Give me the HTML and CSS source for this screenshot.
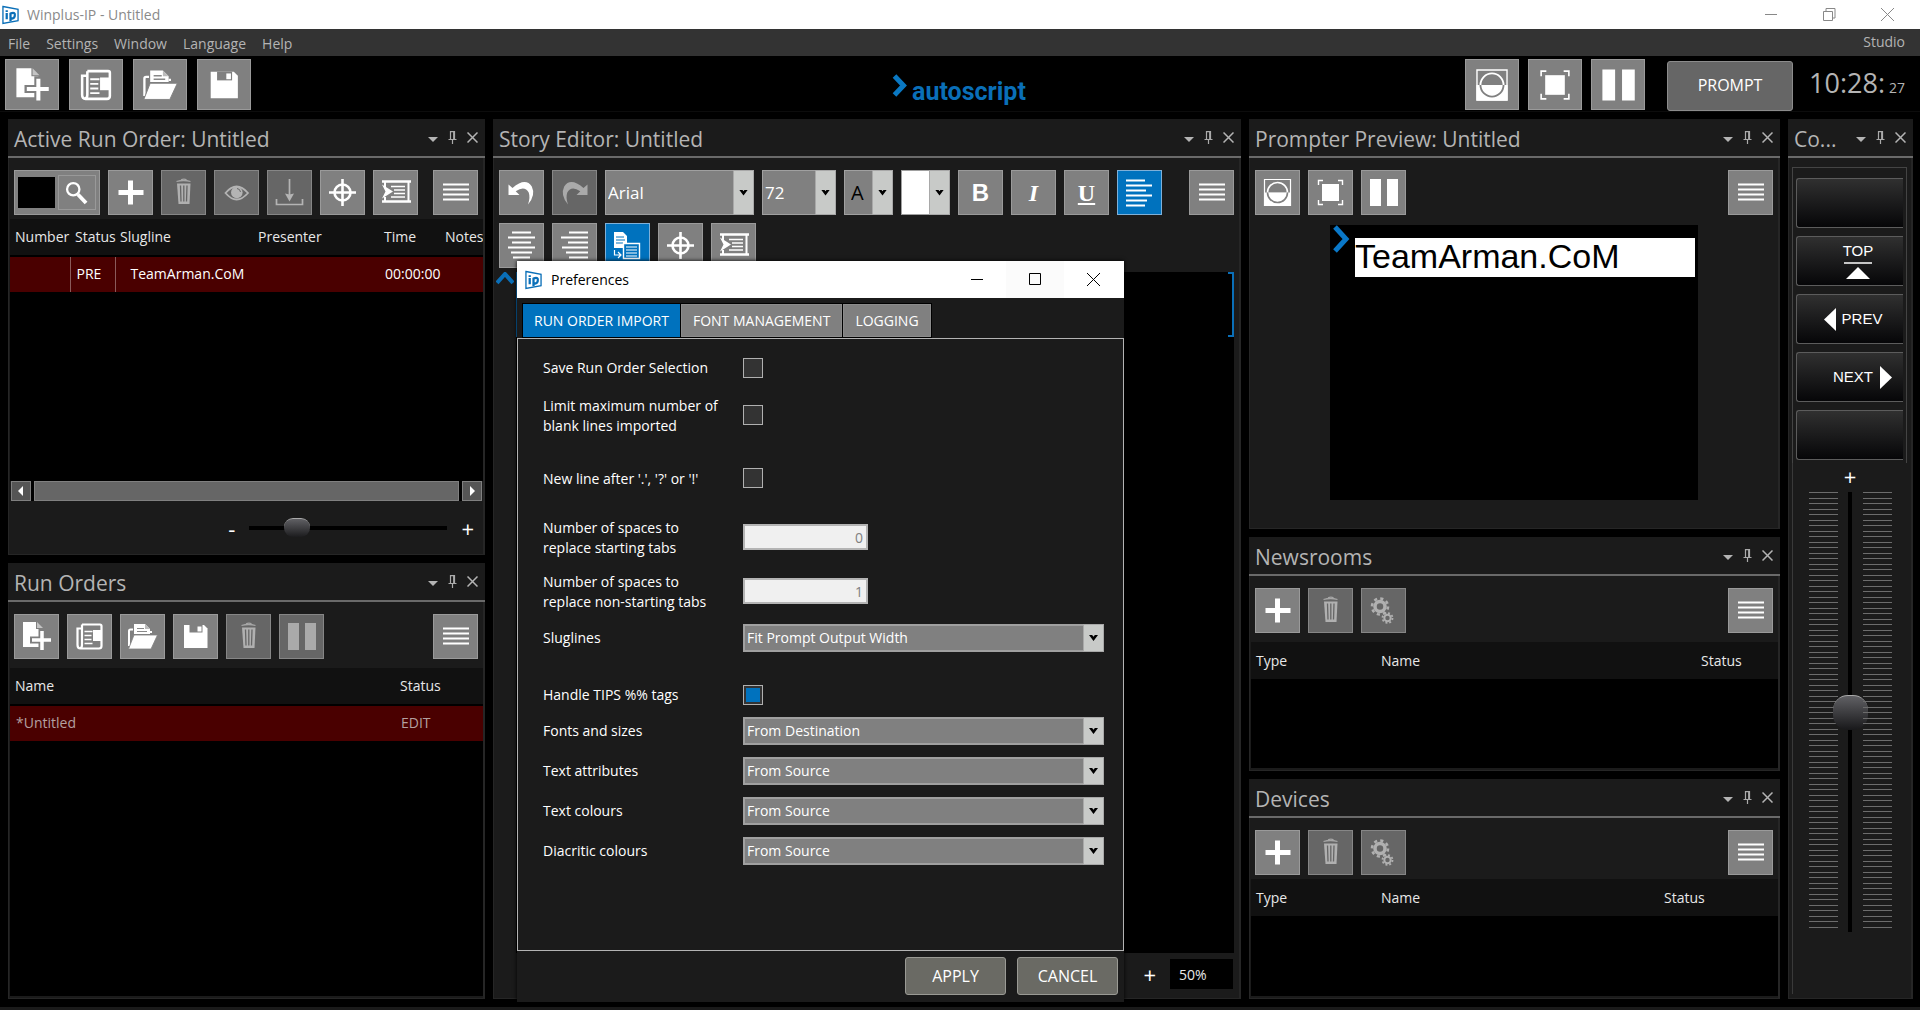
FILE: index.html
```html
<!DOCTYPE html>
<html lang="en">
<head>
<meta charset="utf-8">
<title>Winplus-IP - Untitled</title>
<link rel="stylesheet" href="styles.css">
</head>
<body>
<svg class="sprite" aria-hidden="true">
  <symbol id="i-logo" viewBox="0 0 18 20"><path d="M1 1l16 3v12L1 19z" fill="#fff" stroke="#0a6fb8" stroke-width="1.400"/><path d="M5 8v6.500M5 5v1.800M9 7.500v9M9 8.500c4-2 5 0 4.500 2.500S11 14.500 9 13" fill="none" stroke="#0a6fb8" stroke-width="2.400"/></symbol>
  <symbol id="i-new" viewBox="0 0 45 45"><path d="M9 8h13v7h6v18H9z" fill="#fff"/><path d="M23 8l6 6h-6z" fill="#c4c4c4"/><path d="M28 15v22M16 26h22" stroke="#808080" stroke-width="7"/><path d="M28 17v19M18 26h19" stroke="#fff" stroke-width="3.500"/></symbol>
  <symbol id="i-news" viewBox="0 0 45 45"><path d="M15 10.500h18q1.500 0 1.500 1.500v20q0 2.500-2.500 2.500H13.500Q10.500 34.500 10.500 31V14.500H14M15 10.500V31q0 3-2 3" fill="none" stroke="#fff" stroke-width="2.200"/><path d="M17.500 17.500h8M17.500 21.500h7M17.500 25.500h7M17.500 29.500h8" stroke="#fff" stroke-width="1.600"/><path d="M26 16h8v11h-8z" fill="#fff"/></symbol>
  <symbol id="i-open" viewBox="0 0 45 45"><path d="M9 32V17q0-1.500 1.500-1.500H13M31 19v-2" fill="none" stroke="#fff" stroke-width="2"/><path d="M14 10h11l5 5v5H14z" fill="#fff"/><path d="M25 10l5 5h-5z" fill="#bbb"/><path d="M17 14.500h7M17 17.500h10" stroke="#888" stroke-width="1.200"/><path d="M14 21h23.500L31 35H8.500z" fill="#fff" stroke="#808080" stroke-width=".8"/></symbol>
  <symbol id="i-save" viewBox="0 0 45 45"><path d="M11 11h20l3.500 3.500V34H11z" fill="#fff"/><path d="M16.500 11h13v7.500h-13z" fill="#808080"/><path d="M24.500 12.500h4v5h-4z" fill="#fff"/></symbol>
  <symbol id="i-trash" viewBox="0 0 45 45"><path d="M15.500 11.500q7-2 14 0M20 9.800q3-1.200 5.500 0" fill="none" stroke="#a6a6a6" stroke-width="1.300"/><path d="M16 13.500h13.500L28.500 34h-11z" fill="#b0b0b0"/><path d="M19.500 15.500l.5 16M22.800 15.500v16M26 15.500l-.5 16" stroke="#666" stroke-width="1.300"/></symbol>
  <symbol id="i-pause" viewBox="0 0 45 45"><path d="M9 9h11v27H9zM26 9h11v27H26z" fill="currentColor"/></symbol>
  <symbol id="i-menu" viewBox="0 0 45 45"><path d="M10 14.500h26M10 19.500h26M10 24.500h26M10 29.500h26" stroke="#fff" stroke-width="2"/></symbol>
  <symbol id="i-plus" viewBox="0 0 45 45"><path d="M22.500 10.500v24M10.500 22.500h25" stroke="#fff" stroke-width="5"/></symbol>
  <symbol id="i-eye" viewBox="0 0 45 45"><path d="M11.500 23q11-13 22.500 0-11.500 13-22.500 0z" fill="none" stroke="#b4b4b4" stroke-width="1.800"/><circle cx="22.800" cy="22.500" r="5.800" fill="#b4b4b4"/><path d="M23 18.500a4 4 0 0 1 3.500 3.500" fill="none" stroke="#666" stroke-width="1"/></symbol>
  <symbol id="i-down" viewBox="0 0 45 45"><path d="M22.500 9v17M9.500 29v5.500h26V29" fill="none" stroke="#b4b4b4" stroke-width="1.700"/><path d="M18 23.500l4.500 1 4.500-1-4.500 8z" fill="#b4b4b4"/></symbol>
  <symbol id="i-target" viewBox="0 0 45 45"><circle cx="22.500" cy="22.500" r="8" fill="none" stroke="#fff" stroke-width="2.600"/><path d="M22.500 9v27M9 22.500h27" stroke="#fff" stroke-width="2.600"/></symbol>
  <symbol id="i-scroll" viewBox="0 0 45 45"><path d="M9 11.500h29M9 31.500h29" stroke="#fff" stroke-width="2.600"/><path d="M12 12v5M12 27v4M35.500 12v19" stroke="#fff" stroke-width="2"/><path d="M9 14.500l11 7-11 7 3.500-7z" fill="#fff"/><path d="M18 16.500h14M21 20h11M21 23.500h11M18 27h14" stroke="#fff" stroke-width="1.500"/></symbol>
  <symbol id="i-undo" viewBox="0 0 45 45"><path d="M9.500 14.500v10.500h11l-3.800-3.800q9-6 13 1.300 1.800 5-.7 12 8-9.500 3.800-18Q26.500 7 13.500 18z" fill="currentColor"/></symbol>
  <symbol id="i-left" viewBox="0 0 45 45"><path d="M9 10.500h19M9 15.500h26M9 20.500h20M9 25.500h26M9 30.500h21M9 35.500h19" stroke="#fff" stroke-width="1.800"/></symbol>
  <symbol id="i-center" viewBox="0 0 45 45"><path d="M13 9.500h19M9 14.500h27M13 19.500h19M9 24.500h27M12 29.500h21M14 34.500h17" stroke="#fff" stroke-width="1.800"/></symbol>
  <symbol id="i-right" viewBox="0 0 45 45"><path d="M17 9.500h19M9 14.500h27M16 19.500h20M10 24.500h26M14 29.500h22M17 34.500h19" stroke="#fff" stroke-width="1.800"/></symbol>
  <symbol id="i-paste" viewBox="0 0 45 45"><path d="M9 9h9l4 4v12H9z" fill="#fff"/><path d="M11 14h8M11 17h9M11 20h7" stroke="#0072be" stroke-width="1"/><path d="M9.500 27v5h6M13 29l3 3-3 3" fill="none" stroke="#fff" stroke-width="1.200"/><path d="M18.500 20.500h16v15h-16z" fill="#0072be" stroke="#fff" stroke-width="1.400"/><path d="M21 24h11M21 27h11M21 30h11M21 33h11" stroke="#fff" stroke-width="1.200"/></symbol>
  <symbol id="i-blank" viewBox="0 0 45 45"><path d="M9.500 9.500h26v26h-26z" fill="#808080" stroke="#fff" stroke-width="1.200"/><path d="M9 22.500h27V36H9z" fill="#fff"/><path d="M12.500 22.500a10 10 0 0 1 20 0" fill="#808080" stroke="#fff" stroke-width="1.600"/><path d="M12.500 22.500a10 10 0 0 0 20 0" fill="#fff" stroke="#808080" stroke-width="1.600"/></symbol>
  <symbol id="i-frame" viewBox="0 0 45 45"><path d="M14 14h17v17H14z" fill="#fff"/><path d="M10.500 15v-4.500H15M30 10.500h4.500V15M34.500 30v4.500H30M15 34.500h-4.500V30" fill="none" stroke="#fff" stroke-width="1.400"/></symbol>
  <symbol id="i-gears" viewBox="0 0 45 45"><g fill="none" stroke="#b0b0b0"><circle cx="19" cy="18.500" r="5" stroke-width="3.500"/><circle cx="19" cy="18.500" r="8" stroke-width="2.600" stroke-dasharray="3.140 3.140"/><circle cx="26.500" cy="30" r="3.200" stroke-width="2"/><circle cx="26.500" cy="30" r="5" stroke-width="1.800" stroke-dasharray="1.960 1.960"/></g></symbol>
  <symbol id="i-search" viewBox="0 0 40 36"><circle cx="15" cy="13" r="6.500" fill="none" stroke="#fff" stroke-width="2.400"/><path d="M20 18.500l8.500 9" stroke="#fff" stroke-width="4"/></symbol>
  <symbol id="i-caret" viewBox="0 0 10 5"><path d="M0 0h10L5 5z" fill="#b4b4b4"/></symbol>
  <symbol id="i-pin" viewBox="0 0 9 13"><path d="M2.500 8V.7h4V8M.5 8.500h8M4.500 8.500V13M5.700 1v7" fill="none" stroke="#aaa" stroke-width="1.200"/></symbol>
  <symbol id="i-x" viewBox="0 0 11 11"><path d="M.5.5l10 10M10.500.5l-10 10" fill="none" stroke="currentColor" stroke-width="1.500"/></symbol>
</svg>

<div class="app">
  <header class="titlebar">
    <svg class="logo-icon"><use href="#i-logo"/></svg>
    <h1 class="titlebar-text">Winplus-IP - Untitled</h1>
    <div class="winbtns">
      <button class="winbtn" aria-label="Minimize"><svg width="13" height="13"><path d="M0 6.500h12" stroke="#888"/></svg></button>
      <button class="winbtn" aria-label="Restore"><svg width="13" height="13"><path d="M.5 3.500h9v9h-9zM3 3V.5h9V10h-2" fill="none" stroke="#888"/></svg></button>
      <button class="winbtn" aria-label="Close"><svg width="13" height="13"><path d="M0 0l13 13M13 0L0 13" stroke="#888"/></svg></button>
    </div>
  </header>
  <nav class="menubar">
    <button class="menu-item">File</button><button class="menu-item">Settings</button><button class="menu-item">Window</button><button class="menu-item">Language</button><button class="menu-item">Help</button>
    <span class="studio">Studio</span>
  </nav>
  <div class="mainbar">
    <div class="bar-group">
      <button class="tool big" aria-label="New"><svg><use href="#i-new"/></svg></button>
      <button class="tool big" aria-label="New from template"><svg><use href="#i-news"/></svg></button>
      <button class="tool big" aria-label="Open"><svg><use href="#i-open"/></svg></button>
      <button class="tool big" aria-label="Save"><svg><use href="#i-save"/></svg></button>
    </div>
    <div class="brand"><svg class="brand-mark" viewBox="0 0 15 23"><path d="M2 2l9 9.500L2 21" fill="none" stroke="#0a78c2" stroke-width="5"/></svg><span>autoscript</span></div>
    <div class="bar-group bar-right">
      <button class="tool big" aria-label="Blank"><svg><use href="#i-blank"/></svg></button>
      <button class="tool big" aria-label="Frame"><svg><use href="#i-frame"/></svg></button>
      <button class="tool big" aria-label="Pause"><svg><use href="#i-pause"/></svg></button>
      <button class="prompt-btn">PROMPT</button>
      <div class="clock">10:28:<span class="clock-sec">27</span></div>
    </div>
  </div>

  <main class="workspace">
    <div class="col col-left">
      <section class="pane">
        <header class="pane-head"><h2>Active Run Order: Untitled</h2><div class="pane-btns"><button aria-label="Menu"><svg width="10" height="5"><use href="#i-caret"/></svg></button><button aria-label="Pin"><svg width="9" height="13"><use href="#i-pin"/></svg></button><button aria-label="Close"><svg width="11" height="11"><use href="#i-x"/></svg></button></div></header>
        <div class="pane-body">
          <div class="toolbar">
            <div class="search"><input class="search-input" aria-label="Search"><button class="search-btn" aria-label="Search"><svg width="38" height="36"><use href="#i-search"/></svg></button></div>
            <button class="tool" aria-label="Add"><svg><use href="#i-plus"/></svg></button>
            <button class="tool off" aria-label="Delete"><svg><use href="#i-trash"/></svg></button>
            <button class="tool off" aria-label="Show"><svg><use href="#i-eye"/></svg></button>
            <button class="tool off" aria-label="Import"><svg><use href="#i-down"/></svg></button>
            <button class="tool" aria-label="Target"><svg><use href="#i-target"/></svg></button>
            <button class="tool" aria-label="Cue"><svg><use href="#i-scroll"/></svg></button>
            <button class="tool push" aria-label="More"><svg><use href="#i-menu"/></svg></button>
          </div>
          <div class="list">
            <table class="grid runorder">
              <colgroup><col class="w-num"><col class="w-stat"><col><col class="w-pres"><col class="w-time"><col class="w-notes"></colgroup>
              <thead><tr><th>Number</th><th>Status</th><th>Slugline</th><th>Presenter</th><th>Time</th><th>Notes</th></tr></thead>
              <tbody><tr class="sel"><td></td><td class="div-l">PRE</td><td class="div-l slug">TeamArman.CoM</td><td></td><td class="time">00:00:00</td><td></td></tr></tbody>
            </table>
          </div>
          <div class="hscroll"><button aria-label="Scroll left"><svg width="6" height="10"><path d="M5 0v10L0 5z" fill="#fff"/></svg></button><div class="hscroll-thumb"></div><button aria-label="Scroll right"><svg width="6" height="10"><path d="M1 0v10l5-5z" fill="#fff"/></svg></button></div>
          <div class="zoombar"><span class="sign">-</span><input class="hslider" type="range" min="0" max="100" value="20" aria-label="Zoom"><span class="sign">+</span></div>
        </div>
      </section>
      <section class="pane">
        <header class="pane-head"><h2>Run Orders</h2><div class="pane-btns"><button aria-label="Menu"><svg width="10" height="5"><use href="#i-caret"/></svg></button><button aria-label="Pin"><svg width="9" height="13"><use href="#i-pin"/></svg></button><button aria-label="Close"><svg width="11" height="11"><use href="#i-x"/></svg></button></div></header>
        <div class="pane-body pad-end">
          <div class="toolbar roomy">
            <button class="tool" aria-label="New"><svg><use href="#i-new"/></svg></button>
            <button class="tool" aria-label="New from template"><svg><use href="#i-news"/></svg></button>
            <button class="tool" aria-label="Open"><svg><use href="#i-open"/></svg></button>
            <button class="tool" aria-label="Save"><svg><use href="#i-save"/></svg></button>
            <button class="tool off" aria-label="Delete"><svg><use href="#i-trash"/></svg></button>
            <button class="tool off" aria-label="Pause"><svg><use href="#i-pause"/></svg></button>
            <button class="tool push" aria-label="More"><svg><use href="#i-menu"/></svg></button>
          </div>
          <div class="list">
            <table class="grid">
              <colgroup><col><col class="w-edit"></colgroup>
              <thead><tr><th>Name</th><th>Status</th></tr></thead>
              <tbody><tr class="sel dim"><td>*Untitled</td><td>EDIT</td></tr></tbody>
            </table>
          </div>
        </div>
      </section>
    </div>

    <section class="pane">
      <header class="pane-head"><h2>Story Editor: Untitled</h2><div class="pane-btns"><button aria-label="Menu"><svg width="10" height="5"><use href="#i-caret"/></svg></button><button aria-label="Pin"><svg width="9" height="13"><use href="#i-pin"/></svg></button><button aria-label="Close"><svg width="11" height="11"><use href="#i-x"/></svg></button></div></header>
      <div class="pane-body">
        <div class="toolbar editor-tools">
          <button class="tool" aria-label="Undo"><svg><use href="#i-undo"/></svg></button>
          <button class="tool off" aria-label="Redo"><svg class="flip"><use href="#i-undo"/></svg></button>
          <span class="combo font-name"><select aria-label="Font"><option>Arial</option></select></span>
          <span class="combo font-size"><select aria-label="Size"><option>72</option></select></span>
          <span class="combo swatch text-col"><select aria-label="Text colour"><option>A</option></select></span>
          <span class="combo swatch back-col"><select aria-label="Background colour"><option></option></select></span>
          <button class="tool bold">B</button>
          <button class="tool italic">I</button>
          <button class="tool under">U</button>
          <button class="tool on" aria-label="Align left"><svg><use href="#i-left"/></svg></button>
          <button class="tool push" aria-label="More"><svg><use href="#i-menu"/></svg></button>
        </div>
        <div class="toolbar second">
          <button class="tool" aria-label="Centre"><svg><use href="#i-center"/></svg></button>
          <button class="tool" aria-label="Align right"><svg><use href="#i-right"/></svg></button>
          <button class="tool on" aria-label="Paste"><svg><use href="#i-paste"/></svg></button>
          <button class="tool" aria-label="Target"><svg><use href="#i-target"/></svg></button>
          <button class="tool" aria-label="Cue"><svg><use href="#i-scroll"/></svg></button>
        </div>
        <div class="editor">
          <svg class="up-mark" width="18" height="13"><path d="M1 11l8-9 8 9" fill="none" stroke="#0a6fb8" stroke-width="4"/></svg>
          <div class="editor-page"><div class="bracket left"></div><div class="bracket right"></div></div>
        </div>
        <div class="editor-foot"><span class="sign">+</span><input class="zoom-val" value="50%" aria-label="Zoom level"></div>
      </div>
    </section>

    <div class="col col-right">
      <section class="pane">
        <header class="pane-head"><h2>Prompter Preview: Untitled</h2><div class="pane-btns"><button aria-label="Menu"><svg width="10" height="5"><use href="#i-caret"/></svg></button><button aria-label="Pin"><svg width="9" height="13"><use href="#i-pin"/></svg></button><button aria-label="Close"><svg width="11" height="11"><use href="#i-x"/></svg></button></div></header>
        <div class="pane-body">
          <div class="toolbar">
            <button class="tool" aria-label="Blank"><svg><use href="#i-blank"/></svg></button>
            <button class="tool" aria-label="Frame"><svg><use href="#i-frame"/></svg></button>
            <button class="tool" aria-label="Pause"><svg><use href="#i-pause"/></svg></button>
            <button class="tool push" aria-label="More"><svg><use href="#i-menu"/></svg></button>
          </div>
          <div class="preview">
            <svg class="cue" width="20" height="28" viewBox="0 0 20 28"><path d="M4 2l11 12L4 26" fill="none" stroke="#0a78c8" stroke-width="5"/></svg>
            <div class="preview-line">TeamArman.CoM</div>
          </div>
        </div>
      </section>
      <section class="pane">
        <header class="pane-head"><h2>Newsrooms</h2><div class="pane-btns"><button aria-label="Menu"><svg width="10" height="5"><use href="#i-caret"/></svg></button><button aria-label="Pin"><svg width="9" height="13"><use href="#i-pin"/></svg></button><button aria-label="Close"><svg width="11" height="11"><use href="#i-x"/></svg></button></div></header>
        <div class="pane-body pad-end">
          <div class="toolbar roomy">
            <button class="tool" aria-label="Add"><svg><use href="#i-plus"/></svg></button>
            <button class="tool off" aria-label="Delete"><svg><use href="#i-trash"/></svg></button>
            <button class="tool off" aria-label="Settings"><svg><use href="#i-gears"/></svg></button>
            <button class="tool push" aria-label="More"><svg><use href="#i-menu"/></svg></button>
          </div>
          <div class="list"><table class="grid"><colgroup><col class="w-type"><col><col class="w-news"></colgroup><thead><tr><th>Type</th><th>Name</th><th>Status</th></tr></thead></table></div>
        </div>
      </section>
      <section class="pane">
        <header class="pane-head"><h2>Devices</h2><div class="pane-btns"><button aria-label="Menu"><svg width="10" height="5"><use href="#i-caret"/></svg></button><button aria-label="Pin"><svg width="9" height="13"><use href="#i-pin"/></svg></button><button aria-label="Close"><svg width="11" height="11"><use href="#i-x"/></svg></button></div></header>
        <div class="pane-body pad-end">
          <div class="toolbar">
            <button class="tool" aria-label="Add"><svg><use href="#i-plus"/></svg></button>
            <button class="tool off" aria-label="Delete"><svg><use href="#i-trash"/></svg></button>
            <button class="tool off" aria-label="Settings"><svg><use href="#i-gears"/></svg></button>
            <button class="tool push" aria-label="More"><svg><use href="#i-menu"/></svg></button>
          </div>
          <div class="list"><table class="grid"><colgroup><col class="w-type"><col><col class="w-dev"></colgroup><thead><tr><th>Type</th><th>Name</th><th>Status</th></tr></thead></table></div>
        </div>
      </section>
    </div>

    <section class="pane">
      <header class="pane-head"><h2>Co...</h2><div class="pane-btns"><button aria-label="Menu"><svg width="10" height="5"><use href="#i-caret"/></svg></button><button aria-label="Pin"><svg width="9" height="13"><use href="#i-pin"/></svg></button><button aria-label="Close"><svg width="11" height="11"><use href="#i-x"/></svg></button></div></header>
      <div class="pane-body control">
        <div class="keys">
          <button class="key" aria-label="Unassigned"></button>
          <button class="key key-top"><span>TOP</span><svg width="28" height="18"><path d="M0 1h28" stroke="#fff" stroke-width="1.500"/><path d="M14 5l12 12H2z" fill="#fff"/></svg></button>
          <button class="key key-prev"><svg width="12" height="23"><path d="M12 0v23L0 11.500z" fill="#fff"/></svg><span>PREV</span></button>
          <button class="key key-next"><span>NEXT</span><svg width="12" height="23"><path d="M0 0v23l12-11.500z" fill="#fff"/></svg></button>
          <button class="key" aria-label="Unassigned"></button>
        </div>
        <div class="speed">
          <span class="sign">+</span>
          <div class="fader"><div class="ticks"></div><input class="vslider" type="range" min="0" max="100" value="50" aria-label="Speed"><div class="ticks"></div></div>
        </div>
      </div>
    </section>
  </main>
  <footer class="statusbar"></footer>
</div>

<div class="dialog" role="dialog" aria-labelledby="dlg-title">
  <header class="dlg-head">
    <svg class="logo-icon"><use href="#i-logo"/></svg>
    <h2 id="dlg-title">Preferences</h2>
    <div class="winbtns">
      <button class="winbtn" aria-label="Minimize"><svg width="13" height="13"><path d="M0 6.500h12" stroke="#000"/></svg></button>
      <button class="winbtn hover" aria-label="Maximize"><svg width="13" height="13"><path d="M.5.500h11v11H.5z" fill="none" stroke="#000"/></svg></button>
      <button class="winbtn" aria-label="Close"><svg width="13" height="13"><path d="M0 0l13 13M13 0L0 13" stroke="#000"/></svg></button>
    </div>
  </header>
  <div class="tabs" role="tablist">
    <button class="tab active" role="tab" aria-selected="true">RUN ORDER IMPORT</button><button class="tab" role="tab">FONT MANAGEMENT</button><button class="tab" role="tab">LOGGING</button>
  </div>
  <form class="form">
    <div class="row"><label for="f1">Save Run Order Selection</label><input id="f1" type="checkbox"></div>
    <div class="row two"><label for="f2">Limit maximum number of<br>blank lines imported</label><input id="f2" type="checkbox"></div>
    <div class="row apart"><label for="f3">New line after '.', '?' or '!'</label><input id="f3" type="checkbox"></div>
    <div class="row two apart-s"><label for="f4">Number of spaces to<br>replace starting tabs</label><input id="f4" type="text" value="0"></div>
    <div class="row two"><label for="f5">Number of spaces to<br>replace non-starting tabs</label><input id="f5" type="text" value="1"></div>
    <div class="row"><label for="f6">Sluglines</label><span class="combo"><select id="f6"><option>Fit Prompt Output Width</option></select></span></div>
    <div class="row check"><label for="f7">Handle TIPS %% tags</label><input id="f7" type="checkbox" checked></div>
    <div class="row"><label for="f8">Fonts and sizes</label><span class="combo"><select id="f8"><option>From Destination</option></select></span></div>
    <div class="row"><label for="f9">Text attributes</label><span class="combo"><select id="f9"><option>From Source</option></select></span></div>
    <div class="row"><label for="f10">Text colours</label><span class="combo"><select id="f10"><option>From Source</option></select></span></div>
    <div class="row"><label for="f11">Diacritic colours</label><span class="combo"><select id="f11"><option>From Source</option></select></span></div>
  </form>
  <footer class="dlg-foot"><button class="dlg-btn">APPLY</button><button class="dlg-btn">CANCEL</button></footer>
</div>
</body>
</html>
```
FILE: styles.css
```css
*, *::before, *::after { box-sizing: border-box; }
body { margin: 0; background: #000; color: #e8e8e8; font: 14px/20px "Open Sans", "Noto Sans", sans-serif; }
button, input, select { font: inherit; color: inherit; margin: 0; padding: 0; border: 0; border-radius: 0; background: none; }
h1, h2 { margin: 0; font-weight: 400; }
svg { display: block; }
.sprite { position: absolute; width: 0; height: 0; }

.app { display: flex; flex-direction: column; min-height: 100vh; }
.titlebar { display: flex; align-items: center; height: 29px; padding: 0 4px 0 2px; background: #fff; color: #8a8a8a; }
.titlebar-text { margin-left: 8px; font-size: 14px; }
.logo-icon { width: 17px; height: 20px; }
.winbtns { display: flex; margin-left: auto; align-self: stretch; }
.winbtn { display: flex; align-items: center; justify-content: center; width: 58px; }
.winbtn.hover { background: #fbfbfb; }
.menubar { display: flex; align-items: center; gap: 16px; height: 27px; padding: 3px 15px 0 8px; background: #333; color: #b4b4b4; }
.studio { margin-left: auto; padding-bottom: 4px; }

.mainbar { display: grid; grid-template-columns: 1fr auto 1fr; height: 56px; padding: 3px 15px 0 5px; border-bottom: 1px solid #0c0c0c; margin-bottom: 7px; }
.bar-group { display: flex; gap: 10px; }
.bar-right { justify-content: flex-end; gap: 9px; }
.brand { display: flex; align-items: center; gap: 4px; padding: 12px 0 0 8px; color: #0a6fb8; font: 700 25px/32px "Liberation Sans Narrow", Roboto, sans-serif; }
.brand-mark { width: 16px; height: 23px; margin-bottom: 12px; }
.prompt-btn { width: 126px; height: 50px; margin: 2px 7px 0 13px; padding-bottom: 2px; border: 1px solid #8c8c8c; border-radius: 3px; background: #666; color: #fff; font-size: 16px; }
.clock { display: flex; align-items: baseline; gap: 4px; color: #b4b4b4; font-size: 27px; line-height: 48px; }
.clock-sec { font-size: 14px; }

.tool { display: flex; align-items: center; justify-content: center; flex: none; width: 45px; height: 45px; border: 1px solid #9a9a9a; background: #808080; color: #fff; overflow: hidden; }
.tool svg { flex: none; width: 45px; height: 45px; }
.tool.big { width: 54px; height: 51px; }
.tool.big svg { width: 52px; height: 52px; }
.tool.off { background: #666; border-color: #868686; color: #aaa; }
.tool.on { background: #0072be; border-color: #7fb0d8; }
.tool.push { margin-left: auto; }
.flip { transform: scaleX(-1); }

.workspace { flex: 1; display: grid; grid-template-columns: minmax(0, 477fr) minmax(0, 748fr) minmax(0, 531fr) minmax(0, 125fr); gap: 8px; padding: 0 7px 0 8px; }
.col { display: grid; gap: 8px; }
.col-left { grid-template-rows: minmax(0, 1fr) minmax(0, 1fr); }
.col-right { grid-template-rows: minmax(0, 410fr) minmax(0, 234fr) minmax(0, 220fr); }
.pane { display: flex; flex-direction: column; min-height: 0; background: #1b1b1b; }
.pane-head { display: flex; align-items: center; height: 39px; padding: 0 7px 0 6px; border-bottom: 2px solid #6a6a6a; color: #b4b4b4; }
.pane-head h2 { padding-top: 2px; font-size: 21px; line-height: 34px; white-space: nowrap; }
.pane-btns { display: flex; align-items: center; gap: 10px; margin-left: auto; color: #b4b4b4; }
.pane-btns button:first-child { padding-top: 4px; }
.pane-body { flex: 1; display: flex; flex-direction: column; min-height: 0; border: solid #262626; border-width: 0 2px 1px 1px; }
.pad-end { padding-bottom: 2px; }
.toolbar { display: flex; gap: 8px; padding: 12px 5px 4px 5px; }
.toolbar.roomy { padding-bottom: 9px; }
.search { display: flex; width: 86px; height: 45px; padding: 4px 3px; border: 1px solid #9a9a9a; background: #808080; gap: 3px; }
.search-input { width: 37px; height: 31px; margin-top: 2px; background: #000; }
.search-btn { width: 38px; border: 1px solid #999; }

.list { flex: 1; min-height: 0; margin: 0 0 0 1px; background: #000; overflow: hidden; }
.grid { width: 100%; table-layout: fixed; border-collapse: collapse; }
.grid th { height: 37px; padding: 0 0 0 5px; background: #111; font-weight: 400; text-align: left; white-space: nowrap; }
.grid td { height: 36px; padding: 0 0 2px 6px; border-top: 2px solid #000; white-space: nowrap; }
.sel { background: #4a0000; color: #fff; }
.sel.dim { color: #b4a0a0; }
.grid td.div-l { border-left: 1px solid #8a5a5a; }
.grid td.slug { padding-left: 15px; }
.w-num { width: 60px; } .w-stat { width: 45px; } .w-pres { width: 126px; } .w-time { width: 61px; } .w-notes { width: 43px; }
.w-edit { width: 88px; } .w-type { width: 125px; } .w-news { width: 82px; } .w-dev { width: 119px; }

.hscroll { display: flex; gap: 3px; height: 20px; margin: 0 1px 0 2px; background: #000; }
.hscroll button { display: flex; align-items: center; justify-content: center; width: 20px; border: 1px solid #808080; background: #555; }
.hscroll-thumb { flex: 1; border: 1px solid #808080; background: #666; }
.zoombar { display: flex; align-items: center; justify-content: flex-end; gap: 14px; height: 53px; padding-right: 9px; }
.sign { color: #fff; font-size: 22px; line-height: 24px; }
.hslider { appearance: none; width: 198px; height: 20px; background: linear-gradient(#000, #000) center / 100% 4px no-repeat; }
.hslider::-webkit-slider-thumb { appearance: none; width: 26px; height: 19px; border-top: 1px solid #aaa; border-radius: 9px; background: linear-gradient(#606064, #1c1c1e); }

.combo { position: relative; display: flex; height: 28px; }
.combo select { appearance: none; width: 100%; padding: 0 24px 0 2px; border: 2px solid #a0a0a0; border-right: 0; background: #808080; color: #fff; }
.combo::after { content: ""; position: absolute; inset: 0 0 0 auto; width: 21px; border: 1px solid #a8a8a8; pointer-events: none; background: #c8cac8; }
.combo::before { content: ""; position: absolute; z-index: 1; right: 6px; top: 50%; width: 9px; height: 6px; margin-top: -3px; background: #000; clip-path: polygon(0 0, 35% 0, 50% 30%, 65% 0, 100% 0, 50% 100%); pointer-events: none; }
.editor-tools .combo { height: 45px; }
.editor-tools .combo select { border-width: 1px; font-size: 17px; }
.font-name { width: 149px; } .font-size { width: 74px; } .swatch { width: 49px; }
.editor-tools .text-col select { padding-left: 6px; color: #000; font-size: 20px; }
.back-col select { background: #fff; }
.tool.bold { font: 700 24px/24px "Liberation Sans", sans-serif; }
.tool.italic { font: italic 700 24px/24px "Liberation Serif", serif; }
.tool.under { font: 700 24px/24px "Liberation Serif", serif; text-decoration: underline; }
.second { padding: 4px 4px 4px 5px; }
.editor { flex: 1; display: flex; min-height: 0; }
.up-mark { width: 18px; margin-left: 2px; }
.editor-page { flex: 1; display: flex; justify-content: space-between; margin-left: 2px; margin-right: 5px; background: #000; }
.bracket { width: 6px; height: 65px; border: 2px solid #0a6fb8; }
.bracket.left { border-right: 0; } .bracket.right { border-left: 0; }
.editor-foot { display: flex; align-items: center; justify-content: flex-end; gap: 14px; height: 45px; padding: 0 6px 3px 0; }
.zoom-val { width: 63px; height: 30px; padding: 0 0 0 9px; background: #000; color: #e8e8e8; }

.preview { align-self: center; width: 368px; height: 275px; margin-top: 6px; padding: 13px 3px 0 25px; position: relative; background: #000; }
.cue { position: absolute; left: 1px; top: 0; }
.preview-line { height: 39px; background: #fff; color: #000; font: 34px/36px "Liberation Sans", Arial, sans-serif; }

.control { padding: 9px 4px 4px 3px; }
.keys { display: flex; flex-direction: column; gap: 8px; padding: 10px 3px 3px; border: 1px solid #444; border-bottom: 0; }
.key { display: flex; align-items: center; height: 50px; border: 1px solid #5c5c5c; border-right: 0; border-radius: 3px 0 0 3px; background: linear-gradient(#303030, #060608); color: #fff; font: 15px/18px "Liberation Sans", Arial, sans-serif; }
.key-top { flex-direction: column; justify-content: center; gap: 2px; padding-left: 16px; }
.key-prev { justify-content: center; gap: 6px; padding-left: 6px; }
.key-next { justify-content: flex-end; gap: 7px; padding-right: 11px; }
.speed { flex: 1; display: flex; flex-direction: column; align-items: center; border-left: 1px solid #3a3a3a; padding: 1px 0 0; }
.fader { display: flex; justify-content: center; margin-top: 4px; }
.ticks { width: 29px; height: 440px; background:
  repeating-linear-gradient(#6c6c6c 0 1px, transparent 1px 6px, #6c6c6c 6px 7px, transparent 7px 11px); }
.vslider { appearance: none; writing-mode: vertical-lr; width: 35px; height: 440px; margin: 0 -5px; background: linear-gradient(#000, #000) center / 4px 100% no-repeat; }
.vslider::-webkit-slider-thumb { appearance: none; width: 35px; height: 35px; border-top: 1px solid #aaa; border-radius: 15px; background: linear-gradient(#606064, #18181a); }
.statusbar { height: 11px; border-bottom: 3px solid #1a1a1a; }

.dialog { position: absolute; left: 517px; top: 261px; width: 607px; display: flex; flex-direction: column; background: #1b1b1b; color: #fff; box-shadow: 0 0 4px #000; }
.dlg-head { display: flex; align-items: center; height: 37px; padding: 0 2px 0 8px; background: #fff; color: #000; }
.dlg-head h2 { margin-left: 9px; font-size: 14px; line-height: 20px; }
.tabs { display: flex; gap: 1px; padding: 6px 0 1px 6px; }
.tab { height: 33px; padding: 0 10px; border: 1px solid #8c8c8c; background: #808080; outline: 1px solid #000; font-size: 14px; }
.tab + .tab { padding: 0 11px; }
.tab.active { background: #0072be; border-color: #0072be; }
.form { display: flex; flex-direction: column; gap: 12px; height: 613px; padding: 15px 19px 0 25px; border: 1px solid #b4b4b4; }
.row { display: grid; grid-template-columns: 200px 1fr; align-items: center; min-height: 28px; }
.row.two { min-height: 40px; }
.row.two label { padding-top: 2px; }
.row.check { min-height: 20px; margin-top: 20px; }
.row.apart { margin-top: 16px; }
.row.apart-s { margin-top: 12px; }
.row.check label, .row.apart label { padding-top: 1px; }
.row input[type="checkbox"] { appearance: none; width: 20px; height: 20px; border: 1px solid #b0b0b0; background: #333; }
.row input[type="checkbox"]:checked { background: #0072be; box-shadow: inset 0 0 0 2px #333; }
.row input[type="text"] { width: 125px; height: 26px; padding-right: 3px; border: 2px solid #b4b4b4; background: #f0f0f0; color: #808080; text-align: right; }
.dlg-foot { display: flex; justify-content: flex-end; gap: 11px; padding: 6px 6px 7px; }
.dlg-btn { width: 101px; height: 38px; border: 1px solid #9a9a94; border-radius: 3px; background: #6a6a64; color: #fff; font-size: 16px; }
```
